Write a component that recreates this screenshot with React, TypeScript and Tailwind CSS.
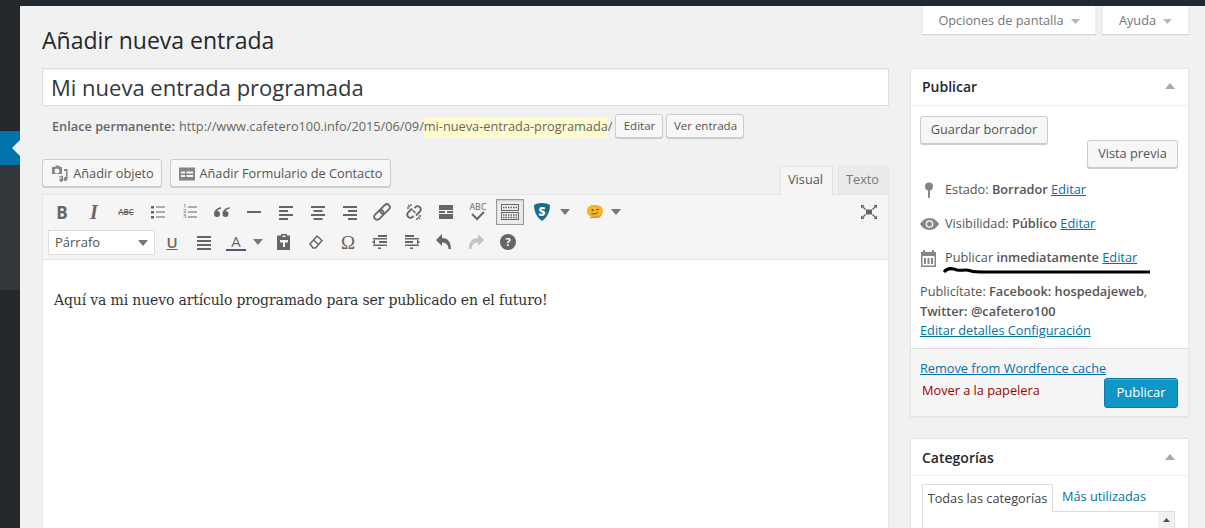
import React from "react";

const c = "#666";
function Ico({ children, s = 20, className = "" }: { children: React.ReactNode; s?: number; className?: string }) {
  return (
    <svg width={s} height={s} viewBox="0 0 20 20" fill={c} className={className}>
      {children}
    </svg>
  );
}
function Lines({ rows }: { rows: [number, number, number][] }) {
  return (
    <Ico>
      {rows.map(([x, y, w], i) => (
        <rect key={i} x={x} y={y} width={w} height={2} />
      ))}
    </Ico>
  );
}
function Btn({ children, className = "" }: { children: React.ReactNode; className?: string }) {
  return <div className={`w-8 h-[26px] flex items-center justify-center shrink-0 ${className}`}>{children}</div>;
}
function Caret({ color = "#777", w = 10, h = 6 }: { color?: string; w?: number; h?: number }) {
  return (
    <svg width={w} height={h} viewBox="0 0 10 6" preserveAspectRatio="none" className="shrink-0">
      <path d="M0 0h10L5 6z" fill={color} />
    </svg>
  );
}
function WpBtn({ children, className = "" }: { children: React.ReactNode; className?: string }) {
  return (
    <div
      className={`inline-flex items-center justify-center bg-[#f7f7f7] border border-[#cccccc] rounded-[3px] shadow-[0_1px_0_#cccccc] text-[#555555] ${className}`}
    >
      {children}
    </div>
  );
}
function Ed() {
  return <span className="text-[#0073aa] underline">Editar</span>;
}
function BoxHead({ title, className = "" }: { title: string; className?: string }) {
  return (
    <div className={`h-[37px] flex items-center justify-between pl-[11px] pr-3 border-b border-[#eeeeee] ${className}`}>
      <span className="text-[14px] font-semibold text-[#23282d]">{title}</span>
      <svg width="10" height="6" viewBox="0 0 10 6" className="mr-[1px]">
        <path d="M0 6h10L5 0z" fill="#a9a9a9" />
      </svg>
    </div>
  );
}

export default function App() {
  return (
    <div className="w-[1205px] h-[528px] overflow-hidden flex flex-col bg-[#f1f1f1] font-['Open_Sans',sans-serif] text-[12.75px] text-[#444444]">
      <div className="h-1.5 bg-[#23282d] shrink-0" />
      <div className="flex flex-1 min-h-0">
        <div className="w-5 shrink-0 flex flex-col">
          <div className="h-[125px] bg-[#23282d]" />
          <div className="h-[34px] bg-[#0073aa] flex items-center justify-end">
            <div className="w-0 h-0 border-y-[8px] border-y-transparent border-r-[8px] border-r-[#f1f1f1]" />
          </div>
          <div className="h-[125px] bg-[#32373c]" />
          <div className="flex-1 bg-[#23282d]" />
        </div>

        <div className="flex-1 pl-[22px] pr-4 min-w-0">
          <div className="flex justify-between h-[62px]">
            <h1 className="text-[23px] leading-[34px] mt-[17px] text-[#23282d] font-normal">Añadir nueva entrada</h1>
            <div className="flex gap-1.5 items-start">
              <div className="w-[174px] h-7 pt-[2px] bg-white shadow-[0_1px_1px_rgba(0,0,0,0.12)] border-x border-[#eeeeee] flex items-center justify-center gap-[7px] text-[#72777c]">
                Opciones de pantalla <Caret color="#b4b9be" w={9} h={5} />
              </div>
              <div className="w-[87px] h-7 pt-[2px] bg-white shadow-[0_1px_1px_rgba(0,0,0,0.12)] border-x border-[#eeeeee] flex items-center justify-center gap-[7px] text-[#72777c]">
                Ayuda <Caret color="#b4b9be" w={9} h={5} />
              </div>
            </div>
          </div>

          <div className="flex gap-[21px]">
            <div className="w-[847px] shrink-0">
              <div className="h-[38px] bg-white border border-[#dddddd] shadow-[inset_0_1px_2px_rgba(0,0,0,0.07)] flex items-center pl-2 text-[22px] text-[#32373c]">
                Mi nueva entrada programada
              </div>
              <div className="flex items-center h-6 mt-2 pl-[10px] text-[#666666]">
                <span className="font-semibold mt-[2px]">Enlace permanente:</span>
                <span className="ml-1 mt-[2px]">http://www.cafetero100.info/2015/06/09/</span>
                <span className="bg-[#fffbcc] mt-[2px]">mi-nueva-entrada-programada</span>
                <span className="mt-[2px]">/</span>
                <WpBtn className="w-12 h-6 ml-[3px] text-[11.5px]">Editar</WpBtn>
                <WpBtn className="w-[78px] h-6 ml-[3px] text-[11.5px]">Ver entrada</WpBtn>
              </div>

              <div className="flex items-start mt-[21px]">
                <WpBtn className="w-[120px] h-7 gap-[3px] pt-px">
                  <svg width="20" height="20" viewBox="0 0 20 20" fill="#82878c">
                    <path d="M2 3h3l1-1.500h3L10 3h2v7H2zM7 4.500a2.500 2.500 0 100 5 2.500 2.500 0 000-5z" />
                    <path d="M14 5h3.500v10a2 2 0 11-1.500-1.900V7h-2zM9 12.500l4-1v4.500a1.800 1.800 0 11-1.500-1.700v-1.300l-2.500.6z" />
                  </svg>
                  Añadir objeto
                </WpBtn>
                <WpBtn className="w-[221px] h-7 ml-2 gap-[3px] pt-px">
                  <svg width="18" height="18" viewBox="0 0 18 18" fill="#82878c">
                    <path d="M1 2.500h16v13H1zM3 6.500v2h4v-2zM8.500 6.500v2H15v-2zM3 10v2h4v-2zM8.500 10v2H15v-2z" fillRule="evenodd" />
                  </svg>
                  Añadir Formulario de Contacto
                </WpBtn>
                <div className="ml-auto mt-[7px] flex items-start gap-[5px] relative z-10 -mb-px">
                  <div className="w-[53px] h-[29px] pb-[2px] pr-[2px] bg-[#f5f5f5] border border-b-0 border-[#e5e5e5] flex items-center justify-center text-[#555555]">
                    Visual
                  </div>
                  <div className="w-[51px] h-7 pr-[2px] bg-[#ebebeb] border border-[#e5e5e5] flex items-center justify-center text-[#777777]">
                    Texto
                  </div>
                </div>
              </div>

              <div className="border border-[#e5e5e5] h-[400px] bg-white">
                <div className="h-[65px] bg-[#f5f5f5] border-b border-[#e5e5e5] pl-[3px] pt-1">
                  <div className="flex items-center h-[26px]">
                    <Btn><span className="font-bold text-[17px] leading-none text-[#666666]">B</span></Btn>
                    <Btn><span className="font-['Liberation_Serif',serif] italic font-bold text-[20px] leading-none text-[#666666]">I</span></Btn>
                    <Btn><span className="text-[8px] leading-none line-through font-semibold text-[#666666]">ABC</span></Btn>
                    <Btn>
                      <Ico>
                        <rect x="3" y="4" width="3" height="2.500" /><rect x="3" y="9" width="3" height="2.500" /><rect x="3" y="14" width="3" height="2.500" />
                        <rect x="8" y="4.500" width="9" height="1" /><rect x="8" y="9.500" width="9" height="1" /><rect x="8" y="14.500" width="9" height="1" />
                      </Ico>
                    </Btn>
                    <Btn>
                      <div className="relative w-5 h-5">
                        <Ico>
                          <rect x="8" y="4.500" width="9" height="1" /><rect x="8" y="9.500" width="9" height="1" /><rect x="8" y="14.500" width="9" height="1" />
                        </Ico>
                        <span className="absolute left-[3px] top-[2px] text-[6px] leading-[5px] text-[#666666] whitespace-pre">{"1\n2\n3"}</span>
                      </div>
                    </Btn>
                    <Btn>
                      <Ico>
                        <path d="M9 5C5 6 2 8.500 2 12a3 3 0 103-3c.5-1 2-1.800 4-2.200zM17.500 5c-4 1-7 3.500-7 7a3 3 0 103-3c.5-1 2-1.800 4-2.200z" />
                      </Ico>
                    </Btn>
                    <Btn><Lines rows={[[3, 9, 14]]} /></Btn>
                    <Btn><Lines rows={[[3, 4, 14], [3, 8, 9], [3, 12, 14], [3, 16, 9]]} /></Btn>
                    <Btn><Lines rows={[[3, 4, 14], [5.5, 8, 9], [3, 12, 14], [5.5, 16, 9]]} /></Btn>
                    <Btn><Lines rows={[[3, 4, 14], [8, 8, 9], [3, 12, 14], [8, 16, 9]]} /></Btn>
                    <Btn>
                      <svg width="20" height="20" viewBox="0 0 20 20" fill="none" stroke={c} strokeWidth="1.800">
                        <rect x="1.500" y="10" width="11" height="6" rx="3" transform="rotate(-45 7 13)" />
                        <rect x="7.500" y="4" width="11" height="6" rx="3" transform="rotate(-45 13 7)" />
                      </svg>
                    </Btn>
                    <Btn>
                      <svg width="20" height="20" viewBox="0 0 20 20" fill="none" stroke={c} strokeWidth="1.800">
                        <path d="M8 6.500L4 10.500a3.200 3.200 0 004.500 4.500L9.500 14M12 13.500l4-4A3.200 3.200 0 0011.500 5l-1 1" />
                        <path d="M4 3l2 2M3 6h2M7 2v2M16 17l-2-2M17 14h-2M13 18v-2M8.500 8l3 3" strokeWidth="1.400" />
                      </svg>
                    </Btn>
                    <Btn><Ico><rect x="3" y="3" width="14" height="5" /><rect x="3" y="9" width="6" height="2" /><rect x="11" y="9" width="6" height="2" /><rect x="3" y="12" width="14" height="5" /></Ico></Btn>
                    <Btn>
                      <div className="relative w-5 h-5">
                        <span className="absolute -top-[1px] left-0 w-5 text-center text-[9px] leading-[11px] text-[#666666]">ABC</span>
                        <svg width="20" height="20" viewBox="0 0 20 20" fill="none" stroke={c} strokeWidth="2" className="absolute inset-0">
                          <path d="M4 12l5 5 7-7" />
                        </svg>
                      </div>
                    </Btn>
                    <Btn>
                      <div className="w-7 h-[26px] bg-[#ececec] border border-[#999999] shadow-[inset_0_1px_2px_rgba(0,0,0,0.15)] flex items-center justify-center shrink-0">
                        <svg width="20" height="18" viewBox="0 0 20 18" fill="none" stroke={c}>
                          <rect x="1.500" y="1.500" width="17" height="6" />
                          <rect x="1.500" y="9.500" width="17" height="7" />
                          <path d="M3 4.500h14M3 12h14M3 14.500h14" strokeDasharray="1.500 1" strokeWidth="1.500" />
                        </svg>
                      </div>
                    </Btn>
                    <Btn>
                      <svg width="18" height="20" viewBox="0 0 18 20">
                        <path d="M9 1c3 0 6 .8 8 2 0 7-3 12.500-8 16C4 15.500 1 10 1 3c2-1.200 5-2 8-2z" fill="#146f8f" />
                        <text x="9" y="13.500" textAnchor="middle" fontSize="12" fontWeight="800" fill="#ffffff" fontFamily="Open Sans">S</text>
                      </svg>
                    </Btn>
                    <div className="w-3 ml-[1px] mr-[4px] flex justify-center"><Caret /></div>
                    <Btn className="ml-[4px]">
                      <svg width="20" height="20" viewBox="0 0 20 20">
                        <path d="M9 3c5 0 9 1.500 9 6 0 4-3 6-7 6-2 0-4 .5-6 1.500l1-2C3 13.500 1.500 11.500 2 8.500 2.500 5 5 3 9 3z" fill="#f5b32a" />
                        <path d="M4 16c3-1.500 6-1.500 8-1.500 2 0 4-1 5-2.500-.5 2.500-3 4-6 4-2 0-4 0-7 0z" fill="#e08a14" />
                        <circle cx="7.500" cy="8" r="1" fill="#8a4b08" /><path d="M11 7.500h3M6.500 11.500c2 1 5 .5 6.500-1.500" stroke="#8a4b08" strokeWidth="1" fill="none" />
                      </svg>
                    </Btn>
                    <div className="w-[10px] flex justify-center"><Caret /></div>
                    <Btn className="ml-auto mr-[3px]">
                      <svg width="18" height="18" viewBox="0 0 18 18" fill="#666">
                        <rect x="6" y="6.500" width="6" height="5" />
                        <path d="M1 2h3.500L3.200 3.300 6 6 5 7 2.300 4.200 1 5.500zM17 2v3.500l-1.300-1.300L13 7l-1-1 2.700-2.700L13.500 2zM1 16v-3.500l1.300 1.300L5 11l1 1-2.700 2.700L4.500 16zM17 16h-3.500l1.300-1.300L12 12l1-1 2.700 2.700 1.300-1.200z" />
                      </svg>
                    </Btn>
                  </div>
                  <div className="flex items-center h-[26px] mt-1 pl-[2px]">
                    <div className="w-[107px] h-[25px] bg-white border border-[#dddddd] flex items-center justify-between px-[6px] pt-[2px] text-[#555555] text-[13px] shrink-0">
                      Párrafo <Caret />
                    </div>
                    <Btn className="ml-[1px]"><span className="font-semibold text-[15px] leading-none underline text-[#666666]">U</span></Btn>
                    <Btn><Lines rows={[[3, 4, 14], [3, 8, 14], [3, 12, 14], [3, 16, 14]]} /></Btn>
                    <Btn>
                      <div className="flex flex-col items-center">
                        <span className="text-[15px] leading-[15px] text-[#666666]">A</span>
                        <span className="block w-5 h-[2px] bg-[#555577]" />
                      </div>
                    </Btn>
                    <div className="w-2 ml-[2px] mr-[2px] flex justify-center"><Caret /></div>
                    <Btn className="ml-[4px]">
                      <Ico>
                        <path d="M7 2h6v1.500h3V18H3V3.500h4zM8.500 3.500v1.500h3V3.500zM6 8v2.500h3V15h2v-4.500h3V8z" fillRule="evenodd" />
                      </Ico>
                    </Btn>
                    <Btn>
                      <svg width="20" height="20" viewBox="0 0 20 20" fill="none" stroke={c} strokeWidth="1.500">
                        <path d="M4 12l7-8 5 4.500-6.500 7.500H7z" /><path d="M7.500 8l5 4.500" />
                      </svg>
                    </Btn>
                    <Btn><span className="font-['Liberation_Serif',serif] text-[19px] leading-none text-[#666666]">Ω</span></Btn>
                    <Btn>
                      <Ico>
                        <rect x="8" y="3" width="9" height="2" /><rect x="3" y="6" width="14" height="1.500" /><rect x="9" y="9" width="8" height="2" /><rect x="3" y="12.500" width="14" height="1.500" /><rect x="8" y="15.500" width="3" height="1.500" />
                        <path d="M2 10l3-2.500v5z" />
                      </Ico>
                    </Btn>
                    <Btn>
                      <Ico>
                        <rect x="3" y="3" width="9" height="2" /><rect x="3" y="6" width="14" height="1.500" /><rect x="3" y="9" width="8" height="2" /><rect x="3" y="12.500" width="14" height="1.500" /><rect x="8" y="15.500" width="3" height="1.500" />
                        <path d="M18 10l-3-2.500v5z" />
                      </Ico>
                    </Btn>
                    <Btn>
                      <Ico>
                        <path d="M2 8l6-6v4c5 0 9 3 9 11h-2.500c0-4-2.500-6.500-6.500-6.500V14z" />
                      </Ico>
                    </Btn>
                    <Btn>
                      <svg width="20" height="20" viewBox="0 0 20 20" fill="#c4c4c4">
                        <path d="M18 8l-6-6v4C7 6 3 9 3 17h2.500c0-4 2.500-6.500 6.500-6.500V14z" />
                      </svg>
                    </Btn>
                    <Btn>
                      <div className="w-4 h-4 rounded-full bg-[#666666] text-white font-bold text-[11px] leading-4 text-center">?</div>
                    </Btn>
                  </div>
                </div>
                <div className="pl-[11px] pt-[28px] font-['DejaVu_Serif',serif] text-[14px] leading-6 text-[#333333] tracking-[-0.15px]">
                  Aquí va mi nuevo artículo programado para ser publicado en el futuro!
                </div>
              </div>
            </div>

            <div className="w-[279px] shrink-0">
              <div className="relative bg-white border border-[#e5e5e5] shadow-[0_1px_1px_rgba(0,0,0,0.04)]">
                <BoxHead title="Publicar" className="pb-[2px]" />
                <div className="pl-[9px] pr-[10px] pt-[10px] flex flex-col">
                  <WpBtn className="w-[128px] h-7 self-start">Guardar borrador</WpBtn>
                  <WpBtn className="w-[91px] h-7 self-end mt-[-4px]">Vista previa</WpBtn>
                </div>
                <div className="pl-[9px] pr-[10px] mt-[5px] text-[#555555]">
                  <div className="h-[34px] flex items-center">
                    <div className="w-[25px] flex justify-center pr-[7px]">
                      <svg width="10" height="16" viewBox="0 0 10 16" fill="#82878c">
                        <circle cx="5" cy="4.500" r="4" /><rect x="4" y="7" width="2" height="9" rx="1" />
                      </svg>
                    </div>
                    <span>Estado: <b className="font-semibold">Borrador</b> <Ed /></span>
                  </div>
                  <div className="h-[34px] flex items-center">
                    <div className="w-[25px] flex">
                      <svg width="19" height="12" viewBox="0 0 19 12">
                        <path d="M9.500 0C5 0 1.800 3 0 6c1.800 3 5 6 9.500 6S17.200 9 19 6c-1.800-3-5-6-9.500-6z" fill="#82878c" />
                        <circle cx="9.500" cy="6" r="3.800" fill="#ffffff" /><circle cx="9.500" cy="6" r="2.500" fill="#82878c" />
                      </svg>
                    </div>
                    <span>Visibilidad: <b className="font-semibold">Público</b> <Ed /></span>
                  </div>
                  <div className="h-[34px] flex items-center">
                    <div className="w-[25px] flex">
                      <svg width="17" height="17" viewBox="0 0 17 17" fill="#82878c">
                        <path d="M1 2h2V0h2v2h7V0h2v2h2v15H1zM2.500 6v9.500h12V6z" fillRule="evenodd" />
                        <rect x="4" y="8" width="2" height="6" /><rect x="7.500" y="8" width="2" height="6" /><rect x="11" y="8" width="2" height="6" />
                      </svg>
                    </div>
                    <span>Publicar <b className="font-semibold">inmediatamente</b> <Ed /></span>
                  </div>
                  <div className="mt-[6px] leading-5 pb-2">
                    <div>Publicítate: <b className="font-semibold">Facebook: hospedajeweb</b>,</div>
                    <div><b className="font-semibold">Twitter:</b> <b className="font-semibold">@cafetero100</b></div>
                    <div className="text-[#0073aa] underline -mt-px">
                      <span>Editar detalles</span> <span>Configuración</span>
                    </div>
                  </div>
                </div>
                <svg width="210" height="8" viewBox="0 0 210 8" className="absolute left-[32px] top-[198px]">
                  <path d="M1 5C4 1 9 1 14 3c6 1 8-1 14 1 3 1 8 1 14 1h165" stroke="#000" strokeWidth="3" fill="none" />
                </svg>
                <div className="h-[68px] bg-[#f5f5f5] border-t border-[#dddddd] relative pl-[9px]">
                  <div className="pt-[10px] leading-[18px] text-[#0073aa] underline">Remove from Wordfence cache</div>
                  <div className="flex justify-between items-start pr-[10px]">
                    <span className="text-[#a00000] ml-[2px] mt-[4px]">Mover a la papelera</span>
                    <div className="w-[74px] h-[30px] mt-px bg-[#0e96c7] border border-[#0a7aa8] rounded-[3px] text-white text-[13px] flex items-center justify-center shadow-[inset_0_1px_0_rgba(120,200,230,0.5)]">
                      Publicar
                    </div>
                  </div>
                </div>
              </div>

              <div className="bg-white border border-[#e5e5e5] mt-[21px] h-[200px] shadow-[0_1px_1px_rgba(0,0,0,0.04)]">
                <BoxHead title="Categorías" />
                <div className="pl-[11px] pr-3 pt-2">
                  <div className="flex items-end h-7 relative z-10">
                    <div className="w-[131px] h-7 bg-white border border-b-0 border-[#dddddd] flex items-center justify-center text-[#444444]">
                      Todas las categorías
                    </div>
                    <span className="ml-[9px] mb-[6px] text-[#0073aa]">Más utilizadas</span>
                  </div>
                  <div className="w-[253px] -mt-px h-[100px] bg-white border border-[#dddddd] flex justify-end">
                    <div className="w-4 bg-[#f1f1f1] flex justify-center pt-[6px]">
                      <svg width="7" height="4" viewBox="0 0 7 4"><path d="M0 4h7L3.500 0z" fill="#505050" /></svg>
                    </div>
                  </div>
                </div>
              </div>
            </div>
          </div>
        </div>
      </div>
    </div>
  );
}
